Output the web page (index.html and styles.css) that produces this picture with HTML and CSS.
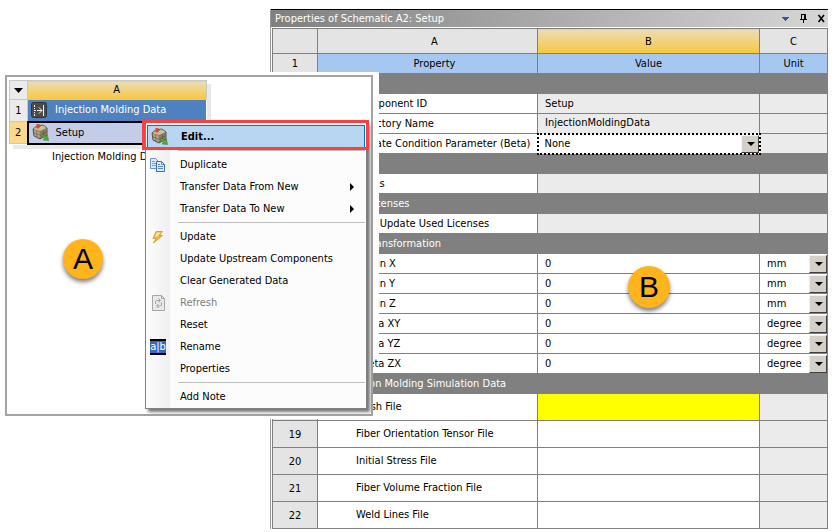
FILE: index.html
```
<!DOCTYPE html>
<html lang="en">
<head>
  <meta charset="UTF-8">
  <title>Injection Molding Data</title>
  <link rel="stylesheet" href="styles.css">
</head>
<body>

<svg class="defs" aria-hidden="true">
  <symbol id="icon-setup" viewBox="0 0 17 17">
    <path d="M1 5 L5 2 L11 1 L15 4 L15 11 L8 15 L2 12 Z" fill="#8d8069" stroke="#5b5142"/>
    <path d="M1.500 5 L5 2.500 L11 1.500 L14.500 4 L8 7 Z" fill="#cdbd9f"/>
    <path d="M2 6 L7.500 8 L7.500 14 L2.500 11.500 Z" fill="#b5a88f"/>
    <path d="M8.500 8 L14.500 5 L14.500 10.500 L8.500 14 Z" fill="#857963"/>
    <path d="M4.500 7 L5 13 M2 9 L7.500 11 M11.500 7 V12 M8.500 11 L14.500 8" stroke="#5f5545" stroke-width=".6"/>
    <path d="M4.500 0 H7.500 V2 H9 L6 5 L3 2 H4.500 Z" fill="#d2502f"/>
    <path d="M10 10 L13.500 12.500 L15.500 11 L16.500 16.500 L11 16 L12.500 14.500 L9 12 Z" fill="#52ad34" stroke="#2f7d22" stroke-width=".5"/>
  </symbol>
</svg>

<main class="properties">
  <header class="titlebar">
    <h1>Properties of Schematic A2: Setup</h1>
    <button aria-label="Window options"><svg width="9" height="9"><path d="M1 3h7v1H7v1H6v1H5v1H4V6H3V5H2V4H1z" fill="#3550a0"/></svg></button>
    <button aria-label="Pin"><svg width="9" height="9"><path d="M2 0h5v5h1v1H5v3H4V6H1V5h1zM3 1v4h2V1z" fill="#000" fill-rule="evenodd"/></svg></button>
    <button aria-label="Close"><svg width="9" height="9"><path d="M1.500 1L7 8M7 1L1.500 8" stroke="#000" stroke-width="1.600"/></svg></button>
  </header>

  <table class="grid">
    <colgroup><col class="col-num"><col class="col-name"><col><col class="col-unit"></colgroup>
    <thead>
      <tr class="letters"><th></th><th>A</th><th class="selected">B</th><th>C</th></tr>
      <tr class="names"><th>1</th><th>Property</th><th>Value</th><th>Unit</th></tr>
    </thead>
    <tbody>
      <tr class="group"><th></th><td colspan="3"></td></tr>
      <tr><th></th><td>Component ID</td><td class="locked">Setup</td><td class="locked"></td></tr>
      <tr><th></th><td>Directory Name</td><td class="locked">InjectionMoldingData</td><td class="locked"></td></tr>
      <tr><th></th><td>Update Condition Parameter (Beta)</td><td class="active"><div class="drop"><select aria-label="Update Condition Parameter (Beta)"><option>None</option></select></div></td><td class="locked"></td></tr>
      <tr class="group"><th></th><td colspan="3"></td></tr>
      <tr><th></th><td>Notes</td><td class="locked"></td><td class="locked"></td></tr>
      <tr class="group"><th></th><td colspan="3">Used Licenses</td></tr>
      <tr><th></th><td>Last Update Used Licenses</td><td class="locked"></td><td class="locked"></td></tr>
      <tr class="group"><th></th><td colspan="3">Rigid Transformation</td></tr>
      <tr><th></th><td>Origin X</td><td>0</td><td><div class="drop"><select aria-label="Origin X unit"><option>mm</option></select></div></td></tr>
      <tr><th></th><td>Origin Y</td><td>0</td><td><div class="drop"><select aria-label="Origin Y unit"><option>mm</option></select></div></td></tr>
      <tr><th></th><td>Origin Z</td><td>0</td><td><div class="drop"><select aria-label="Origin Z unit"><option>mm</option></select></div></td></tr>
      <tr><th></th><td>Theta XY</td><td>0</td><td><div class="drop"><select aria-label="Theta XY unit"><option>degree</option></select></div></td></tr>
      <tr><th></th><td>Theta YZ</td><td>0</td><td><div class="drop"><select aria-label="Theta YZ unit"><option>degree</option></select></div></td></tr>
      <tr><th></th><td>Theta ZX</td><td>0</td><td><div class="drop"><select aria-label="Theta ZX unit"><option>degree</option></select></div></td></tr>
      <tr class="group"><th></th><td colspan="3">Injection Molding Simulation Data</td></tr>
      <tr class="file"><th></th><td>Mesh File</td><td class="required"></td><td class="locked"></td></tr>
      <tr class="file"><th>19</th><td>Fiber Orientation Tensor File</td><td></td><td class="locked"></td></tr>
      <tr class="file"><th>20</th><td>Initial Stress File</td><td></td><td class="locked"></td></tr>
      <tr class="file"><th>21</th><td>Fiber Volume Fraction File</td><td></td><td class="locked"></td></tr>
      <tr class="file"><th>22</th><td>Weld Lines File</td><td></td><td class="locked"></td></tr>
    </tbody>
  </table>
</main>

<section class="schematic">
  <table class="system">
    <tr><th><svg width="9" height="5"><path d="M0 0h9L4.500 5z"/></svg></th><th class="selected">A</th></tr>
    <tr class="system-title">
      <th>1</th>
      <td><div class="cell"><svg width="17" height="17" viewBox="0 0 17 17"><rect x=".5" y=".5" width="15" height="15" rx="2" fill="#4b4b4b" stroke="#333"/><path d="M3.500 3v2M3.500 6v1M3.500 10v1M3.500 12v2M12.500 3v11M3 8.500h2M6 8.500h5M8 5.500l3 3-3 3" fill="none" stroke="#eee"/></svg>Injection Molding Data</div></td>
    </tr>
    <tr class="system-setup">
      <th class="selected">2</th>
      <td><div class="cell"><svg width="17" height="17"><use href="#icon-setup"/></svg>Setup</div></td>
    </tr>
  </table>
  <p class="caption">Injection Molding Data</p>
</section>

<div class="menu" role="menu">
  <button class="edit" role="menuitem"><span class="icon"><svg width="17" height="17"><use href="#icon-setup"/></svg></span>Edit...</button>
  <hr>
  <button role="menuitem"><span class="icon"><svg width="16" height="14" viewBox="0 0 16 14"><path d="M.5.5h5l3 3v7h-8z" fill="#dcebff" stroke="#6b93cf"/><path d="M2 3.500h3M2 5.500h4M2 7.500h4" stroke="#7ba0d8"/><path d="M6.500 3.500h5l3 3v7h-8z" fill="#dcebff" stroke="#3f6db5"/><path d="M11.500 3.500v3h3M8 6.500h2M8 8.500h5M8 10.500h5" fill="none" stroke="#5a88cd"/></svg></span>Duplicate</button>
  <button role="menuitem"><span class="icon"></span>Transfer Data From New<svg class="more" width="4" height="8"><path d="M0 0l4 4-4 4z"/></svg></button>
  <button role="menuitem"><span class="icon"></span>Transfer Data To New<svg class="more" width="4" height="8"><path d="M0 0l4 4-4 4z"/></svg></button>
  <hr>
  <button role="menuitem"><span class="icon"><svg width="12" height="13" viewBox="0 0 12 13"><path d="M4 .5h6.500L7.500 4.500h3L1.500 12 4 7.500H1z" fill="#f0b53c" stroke="#d9962c" stroke-width=".8"/><path d="M4.800 1.500h3.700L5.500 5.500H2.800z" fill="#ffe596"/></svg></span>Update</button>
  <button role="menuitem"><span class="icon"></span>Update Upstream Components</button>
  <button role="menuitem"><span class="icon"></span>Clear Generated Data</button>
  <button role="menuitem" disabled><span class="icon"><svg width="13" height="16" viewBox="0 0 13 16"><path d="M.5.5h9l3 3v12H.5z" fill="#e9e9e9" stroke="#a6a6a6"/><path d="M9.500.5v3h3" fill="none" stroke="#a6a6a6"/><path d="M3.500 9V6.500l1-1H8M6.500 3.500l2 2-2 2M9.500 7.500V10l-1 1H5M6.500 9l-2 2 2 2" fill="none" stroke="#a0a0a0"/></svg></span>Refresh</button>
  <button role="menuitem"><span class="icon"></span>Reset</button>
  <button role="menuitem"><span class="icon"><span class="rename">a|b</span></span>Rename</button>
  <button role="menuitem"><span class="icon"></span>Properties</button>
  <hr>
  <button role="menuitem"><span class="icon"></span>Add Note</button>
</div>
<div class="highlight"></div>

<div class="badge badge-a">A</div>
<div class="badge badge-b">B</div>

</body>
</html>
```
FILE: styles.css
```
* {
  box-sizing: border-box;
}
body {
  margin: 0;
  background: #fff;
  color: #000;
  font: 11px/16px Tahoma, "DejaVu Sans Condensed", "DejaVu Sans", sans-serif;
}
button, select {
  font: inherit;
  color: inherit;
  border: 0;
  padding: 0;
  background: none;
}
.defs {
  display: none;
}

/* properties panel */
.properties {
  margin: 9px 5px 0 270px;
  border-left: 1px solid #999;
}
.titlebar {
  display: flex;
  align-items: center;
  height: 18px;
  padding: 0 2px 0 4px;
  border-top: 1px solid #000;
  background: linear-gradient(to right, #808080, #d6d6d6);
}
.titlebar h1 {
  flex: 1;
  margin: 0;
  font-size: 11px;
  font-weight: normal;
  color: #fff;
}
.titlebar button {
  width: 9px;
  height: 9px;
  margin-left: 9px;
}
.titlebar svg {
  display: block;
}
table {
  border-collapse: collapse;
  table-layout: fixed;
}
th, td {
  padding: 0;
  font-weight: normal;
}
.grid {
  width: calc(100% - 1px);
  margin: 1px 0 0 1px;
}
.grid th, .grid td {
  border: 1px solid #808080;
}
.grid td {
  padding-left: 7px;
  white-space: nowrap;
}
.grid td:nth-child(2) {
  padding-left: 38px;
}
.grid th {
  background: #e4e4e4;
}
.grid th:nth-child(2) {
  padding-left: 14px;
}
.col-num {
  width: 45px;
}
.col-name {
  width: 220px;
}
.col-unit {
  width: 68px;
}
.grid tr {
  height: 20px;
}
.grid .letters {
  height: 25px;
}
.grid .letters th {
  padding-top: 2px;
}
.grid .file {
  height: 27px;
}
.grid .file th {
  padding-top: 2px;
}
.grid .names th + th {
  background: #a6c8f0;
}
.grid .letters .selected {
  background: linear-gradient(#ecdcb8, #f7c83e);
}
.grid .group td {
  padding-left: 21px;
  background: #808080;
  color: #fff;
}
.grid .locked {
  background: #ebebeb;
}
.grid .required {
  background: #ff0;
}
.grid .active {
  border: 2px dotted #000;
  padding-left: 6px;
}

.drop {
  display: flex;
  align-items: center;
  position: relative;
}
.drop select {
  flex: 1;
  height: 16px;
  appearance: none;
}
.drop::after {
  content: "";
  position: absolute;
  right: 0;
  width: 16px;
  height: 16px;
  background: #d4d0c8;
  border: 1px solid;
  border-color: #f0f0f0 #404040 #404040 #f0f0f0;
  pointer-events: none;
}
.drop::before {
  content: "";
  position: absolute;
  z-index: 1;
  right: 4px;
  border: 4px solid transparent;
  border-top-color: #000;
  border-bottom: 0;
  pointer-events: none;
}

/* schematic window */
.schematic {
  position: absolute;
  left: 5px;
  top: 75px;
  width: 368px;
  height: 341px;
  padding: 3px 2px;
  background: #fff;
  border: 2px solid #a3a3a3;
  box-shadow: 0 3px 0 #fff;
}
/* white edge above and beside the window */
.schematic::before {
  content: "";
  position: absolute;
  top: -5px;
  right: -8px;
  width: 120px;
  height: 281px;
  border: solid #fff;
  border-width: 3px 6px 0 0;
}
.system {
  width: 198px;
  box-shadow: 4px 4px 0 #e9e9e9;
}
.system tr {
  height: 22px;
}
.system tr:first-child {
  height: 19px;
}
.system th {
  border: 1px solid #c8c8c8;
  background: #ebebeb;
}
.system th:first-child {
  width: 18px;
}
.system th.selected {
  background: linear-gradient(#ecdcb8, #f7c83e);
}
.system tr:last-child th.selected {
  background: #fbd98a;
}
.system th svg {
  display: block;
  margin: auto;
}
.system-title td {
  background: #4e81bf;
  color: #fff;
}
.system-setup td {
  background: #c3cce8;
  border: 2px solid #000;
}
.cell {
  display: flex;
  align-items: center;
  gap: 7px;
  padding-left: 3px;
}
.caption {
  margin: 4px 0 0 43px;
}

/* context menu */
.menu {
  position: absolute;
  left: 145px;
  top: 122px;
  width: 222px;
  padding: 2px 1px 0;
  border: 1px solid #808080;
  background: linear-gradient(to right, #fdfdfd, #efefef 24px, #fcfcfc 24px);
  box-shadow: 3px 3px 3px #777;
}
.menu button {
  display: flex;
  align-items: center;
  width: 100%;
  height: 22px;
  padding-right: 11px;
  text-align: left;
}
.menu button:disabled {
  color: #808080;
}
.menu .edit {
  height: 23px;
  border: 1px solid #0078d7;
  background: #b8d6f1;
  font-weight: bold;
}
.icon {
  display: flex;
  justify-content: center;
  width: 22px;
  margin-right: 11px;
}
.more {
  margin-left: auto;
}
.rename {
  width: 16px;
  border: solid #000;
  border-width: 2px 0;
  background: #316ac5;
  color: #fff;
  line-height: 12px;
  text-align: center;
}
.menu hr {
  height: 1px;
  margin: 2px 0 3px 31px;
  border: 0;
  background: #bdbdbd;
}
.highlight {
  position: absolute;
  left: 142px;
  top: 120px;
  width: 227px;
  height: 30px;
  border: 3px solid #f94144;
  pointer-events: none;
}

.badge {
  position: absolute;
  width: 40px;
  height: 40px;
  border-radius: 50%;
  background: #ffb41c;
  box-shadow: 0 3px 4px rgba(0, 0, 0, 0.5);
  font: 30px/40px "Liberation Sans", Arial, sans-serif;
  text-align: center;
}
.badge-a {
  left: 63px;
  top: 239px;
}
.badge-b {
  left: 628px;
  top: 266px;
  width: 42px;
  height: 42px;
  line-height: 42px;
}
```
